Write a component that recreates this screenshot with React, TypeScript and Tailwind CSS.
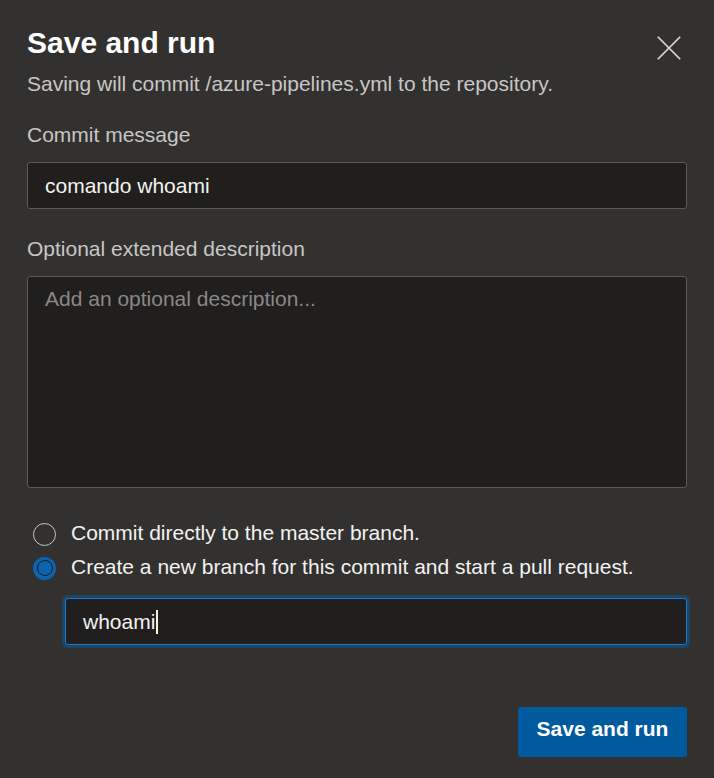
import { useState } from 'react';

export default function App() {
  const [mode, setMode] = useState<'direct' | 'branch'>('branch');

  return (
    <div className="w-[714px] h-[778px] bg-[#323130] font-['Liberation_Sans',Arial,sans-serif] px-[27px] pt-[25px] flex flex-col">
      {/* Header */}
      <div className="flex items-start justify-between">
        <h1 className="text-[30px] leading-[36px] font-bold text-white">Save and run</h1>
        <button className="mt-[11px] mr-[6px] text-[#e1dfdd]">
          <svg width="24" height="24" viewBox="0 0 24 24" fill="none" stroke="currentColor" strokeWidth="1.6">
            <path d="M0.8 0.8 L23.2 23.2 M23.2 0.8 L0.8 23.2" />
          </svg>
        </button>
      </div>
      <p className="mt-[9px] text-[21px] leading-[28px] text-[#c8c6c4]">
        Saving will commit /azure-pipelines.yml to the repository.
      </p>

      {/* Commit message */}
      <label className="mt-[23px] text-[21px] leading-[28px] text-[#c8c6c4]">Commit message</label>
      <div className="mt-[13px] h-[47px] bg-[#201f1e] border border-[#5c5a58] rounded-[3px] px-[17px] flex items-center text-[21px] text-[#f3f2f1]">
        comando whoami
      </div>

      {/* Description */}
      <label className="mt-[26px] text-[21px] leading-[28px] text-[#c8c6c4]">Optional extended description</label>
      <div className="mt-[13px] h-[212px] bg-[#201f1e] border border-[#5c5a58] rounded-[3px] px-[17px] pt-[8px] text-[21px] leading-[28px] text-[#8a8886]">
        Add an optional description...
      </div>

      {/* Radios */}
      <div className="mt-[29px] flex flex-col">
        <button onClick={() => setMode('direct')} className="h-[34px] flex items-center gap-[15px] ml-[6px] text-left">
          {mode === 'direct' ? (
            <span className="w-[23px] h-[23px] rounded-full bg-[#0c63b0] flex items-center justify-center">
              <span className="w-[16px] h-[16px] rounded-full border border-[#1b1a19]" />
            </span>
          ) : (
            <span className="w-[23px] h-[23px] rounded-full border border-[#c8c6c4]" />
          )}
          <span className="text-[21px] text-[#f3f2f1] -mt-[2px]">Commit directly to the master branch.</span>
        </button>
        <button onClick={() => setMode('branch')} className="h-[34px] flex items-center gap-[15px] ml-[6px] text-left">
          {mode === 'branch' ? (
            <span className="w-[23px] h-[23px] rounded-full bg-[#0c63b0] flex items-center justify-center">
              <span className="w-[16px] h-[16px] rounded-full border border-[#1b1a19]" />
            </span>
          ) : (
            <span className="w-[23px] h-[23px] rounded-full border border-[#c8c6c4]" />
          )}
          <span className="text-[21px] text-[#f3f2f1] -mt-[2px]">Create a new branch for this commit and start a pull request.</span>
        </button>
      </div>

      {/* Branch name */}
      <div className="mt-[13px] ml-[38px] h-[47px] bg-[#201f1e] border border-[#1a7ad0] rounded-[3px] shadow-[0_0_0_3px_#1f4566] px-[17px] flex items-center text-[21px] text-[#f3f2f1]">
        whoami
        <span className="w-[2px] h-[24px] bg-[#f3f2f1] ml-[1px]" />
      </div>

      {/* Footer */}
      <div className="mt-[62px] flex justify-end">
        <button className="w-[169px] h-[50px] pb-[6px] bg-[#005a9e] rounded-[3px] text-[21px] font-bold text-white">
          Save and run
        </button>
      </div>
    </div>
  );
}
